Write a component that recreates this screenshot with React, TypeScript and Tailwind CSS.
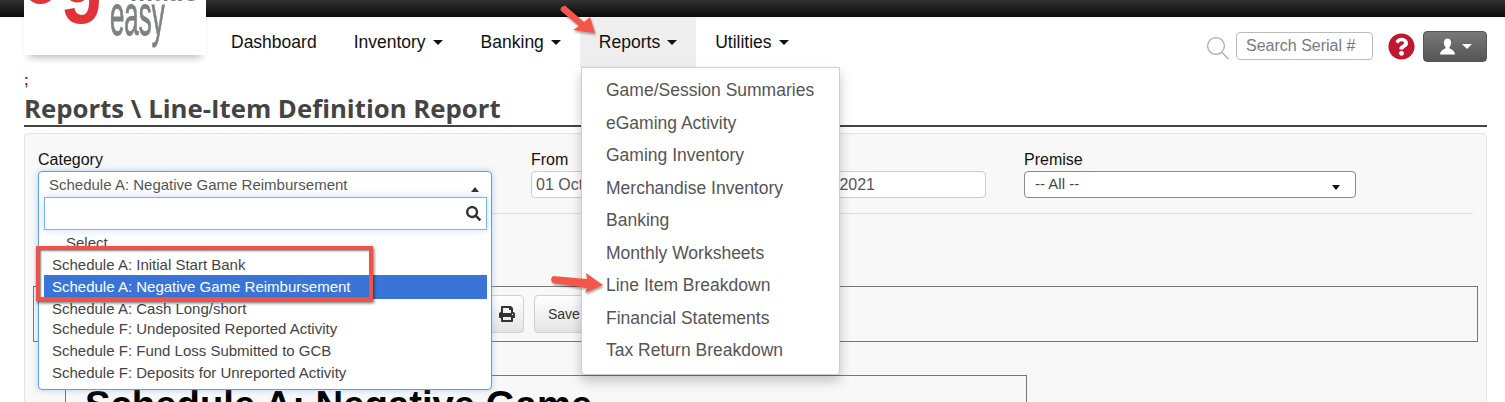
import React from "react";
import { FaPrint, FaQuestionCircle, FaSearch } from "react-icons/fa";

const sans = "font-['Liberation_Sans',Arial,sans-serif]";

function Caret({ up = false, light = false, small = false }: { up?: boolean; light?: boolean; small?: boolean }) {
  return (
    <span
      className={`inline-block w-0 h-0 border-x-transparent ${small ? "border-x-[4px]" : "border-x-[5px]"} ${up ? "border-b-[5px]" : "border-t-[5px]"} ${light ? "border-t-white" : "border-t-[#111] border-b-[#333]"}`}
    />
  );
}

function NavItem({ label, caret = true, active = false, pad = "px-[19px]" }: { label: string; caret?: boolean; active?: boolean; pad?: string }) {
  return (
    <div className={`h-[50px] flex items-center gap-[7px] text-[17.5px] text-[#111] ${pad} ${active ? "bg-[#eeeeee]" : ""}`}>
      <span>{label}</span>
      {caret && <Caret />}
    </div>
  );
}

const reports = [
  "Game/Session Summaries",
  "eGaming Activity",
  "Gaming Inventory",
  "Merchandise Inventory",
  "Banking",
  "Monthly Worksheets",
  "Line Item Breakdown",
  "Financial Statements",
  "Tax Return Breakdown",
];

const options = [
  { t: "Schedule A: Initial Start Bank", c: "h-[21px] pt-[1px]" },
  { t: "Schedule A: Negative Game Reimbursement", c: "h-[24px] bg-[#3875d7] text-white" },
  { t: "Schedule A: Cash Long/short", c: "h-[20px]" },
  { t: "Schedule F: Undeposited Reported Activity", c: "h-[21px]" },
  { t: "Schedule F: Fund Loss Submitted to GCB", c: "h-[22px]" },
  { t: "Schedule F: Deposits for Unreported Activity", c: "h-[22px]" },
];

function Logo() {
  return (
    <div className="relative z-20 -mt-[17px] w-[182px] h-[55px] shrink-0 overflow-hidden bg-white shadow-[0_7px_8px_-5px_rgba(0,0,0,0.3)]">
      <span className="absolute -left-[4px] -top-[82px] text-[100px] leading-none font-bold text-[#e4323a] scale-x-[0.72] origin-top-left blur-[0.4px] font-['Liberation_Sans',sans-serif]">eg</span>
      <span className="absolute left-[106px] -top-[21px] text-[26px] leading-none font-bold text-[#77787b] blur-[0.4px] font-['Liberation_Sans',sans-serif]">made</span>
      <span className="absolute left-[86px] -top-[14px] text-[34px] leading-none text-[#808184] scale-y-[1.7] scale-x-[0.76] origin-top-left blur-[0.4px] [-webkit-text-stroke:0.6px_#808184] font-['Liberation_Sans',sans-serif]">easy</span>
    </div>
  );
}

function Field({ label, width, children }: { label: string; width: string; children: React.ReactNode }) {
  return (
    <div className={`${width} shrink-0 relative`}>
      <div className="h-[21px] leading-[20px] text-[16px] text-[#111]">{label}</div>
      {children}
    </div>
  );
}

function CategoryDropdown() {
  return (
    <div className="absolute z-10 left-0 top-[21px] w-[454px] h-[219px] bg-white border border-[#5c9fe6] rounded-[4px] shadow-[0_0_6px_rgba(90,160,230,0.45)] text-[15px] text-[#444] overflow-hidden">
      <div className="h-[25px] pl-[10px] pr-[12px] pt-[2px] flex items-center justify-between">
        <span className="text-[#555]">Schedule A: Negative Game Reimbursement</span>
        <span className="mt-[3px]"><Caret up small /></span>
      </div>
      <div className="ml-[5px] mr-[4px] h-[33px] border border-[#7ab3ea] shadow-[0_0_8px_rgba(90,160,230,0.35)] flex items-center justify-end pr-[5px]">
        <FaSearch className="text-[15px] text-[#333]" />
      </div>
      <div className="ml-[5px] mr-[4px] pt-[2px]">
        <div className="h-[22px] pl-[22px] leading-[22px]">Select</div>
        {options.map((o) => (
          <div key={o.t} className={`pl-[8px] flex items-center ${o.c}`}>{o.t}</div>
        ))}
      </div>
    </div>
  );
}

function ReportsMenu() {
  return (
    <div className="absolute z-30 left-[581px] top-[67px] w-[259px] h-[308px] bg-white border border-[#cfcfcf] rounded-b-[4px] shadow-[0_6px_12px_rgba(0,0,0,0.22)] pt-[6px] text-[17.5px] text-[#555]">
      {reports.map((r) => (
        <div key={r} className="h-[32.5px] pl-[24px] flex items-center">{r}</div>
      ))}
    </div>
  );
}

export default function App() {
  return (
    <div className={`relative w-[1505px] h-[402px] overflow-hidden bg-white ${sans}`}>
      <div className="h-[17px] bg-gradient-to-b from-[#333333] to-[#0a0a0a]" />
      <div className="h-[50px] flex pl-[24px] pr-[18px] shadow-[inset_0_4px_4px_-3px_rgba(0,0,0,0.06)]">
        <Logo />
        <div className="flex ml-[6px]">
          <NavItem label="Dashboard" caret={false} pad="pl-[19px] pr-[18px]" />
          <NavItem label="Inventory" />
          <NavItem label="Banking" />
          <NavItem label="Reports" active />
          <NavItem label="Utilities" />
        </div>
        <div className="ml-auto flex items-center h-[50px] gap-[6px] pt-[8px]">
          <svg width="24" height="25" viewBox="0 0 24 25" fill="none" stroke="#aaaaaa" strokeWidth="1.3" className="mt-[4px]">
            <circle cx="10" cy="10" r="8.4" />
            <path d="M16 16.5l6.5 6.5" />
          </svg>
          <div className="w-[137px] h-[28px] border border-[#bbbbbb] rounded-[4px] pl-[9px] flex items-center text-[16px] text-[#7a7a7a] bg-white">Search Serial #</div>
          <FaQuestionCircle className="ml-[9px] text-[27px] text-[#c3162f]" />
          <div className="ml-[2px] w-[64px] h-[31px] rounded-[4px] border border-[#555] bg-gradient-to-b from-[#787878] to-[#565656] flex items-center justify-center gap-[6px]">
            <svg width="17" height="17" viewBox="0 0 17 17" fill="#ffffff">
              <path d="M8.5 0.5c2.3 0 3.6 1.8 3.6 4.2 0 1.9-.8 3.5-1.6 4.4-.3.4-.2 1.1.3 1.4 1.6.9 4.7 2 5.2 5.9H1c.5-3.9 3.6-5 5.2-5.9.5-.3.6-1 .3-1.4C5.700 8.200 4.900 6.600 4.900 4.700 4.900 2.300 6.200 0.500 8.500 0.500z" />
            </svg>
            <Caret light />
          </div>
        </div>
      </div>

      <main className="pl-[24px] pr-[18px]">
        <div className="h-[25px] leading-[27px] text-[14px] font-bold text-[#a02020]">;</div>
        <h1 className="h-[35px] border-b-2 border-[#444] text-[25.75px] leading-[33px] font-bold text-[#444] font-['Open_Sans',sans-serif]">
          Reports \ Line-Item Definition Report
        </h1>
        <section className="mt-[6px] h-[300px] bg-[#f8f8f8] border border-[#e3e3e3] rounded-[4px] px-[13px] pt-[16px]">
          <div className="flex gap-[39px] h-[64px] border-b border-[#dddddd]">
            <Field label="Category" width="w-[454px]">
              <CategoryDropdown />
            </Field>
            <Field label="From" width="w-[455px]">
              <div className="h-[27px] bg-white border border-[#cccccc] rounded-[4px] pl-[4px] flex items-center justify-between text-[16px] text-[#555]">
                <span>01 Oct</span>
                <span className="mr-[110px]">2021</span>
              </div>
            </Field>
            <Field label="Premise" width="w-[332px] -ml-[1px]">
              <div className="h-[27px] bg-white border border-[#8a8a8a] rounded-[4px] pl-[10px] pr-[15px] flex items-center justify-between text-[15px] text-[#444]">
                <span>-- All --</span>
                <span className="mt-[1px]"><Caret small /></span>
              </div>
            </Field>
          </div>
          <div className="-mx-[5px] mt-[72px] h-[56px] border border-[#777777] flex items-center pl-[455px] gap-[10px]">
            <div className="w-[35px] h-[38px] border border-[#d0d0d0] rounded-[4px] bg-gradient-to-b from-[#ffffff] to-[#e4e4e4] flex items-center justify-center">
              <FaPrint className="text-[16px] text-[#333]" />
            </div>
            <div className="w-[90px] h-[38px] border border-[#d0d0d0] rounded-[4px] bg-gradient-to-b from-[#ffffff] to-[#e4e4e4] pl-[13px] flex items-center text-[14px] text-[#333]">Save</div>
          </div>
          <div className="ml-[27px] mt-[33px] w-[962px] h-[60px] border border-[#777777] pl-[19px] pt-[7px] text-[38.3px] leading-[44px] font-bold text-black whitespace-nowrap">
            Schedule A: Negative Game
          </div>
        </section>
      </main>

      <ReportsMenu />

      {/* annotations */}
      <div className="absolute z-40 left-[36px] top-[246px] w-[337px] h-[55px] border-[4px] border-[#f0524a] shadow-[1px_2px_3px_rgba(0,0,0,0.6),inset_1px_1px_2px_rgba(0,0,0,0.5)]" />
      <svg className="absolute z-40 left-[555px] top-[0px] drop-shadow-[1px_2px_1px_rgba(0,0,0,0.35)]" width="50" height="40" viewBox="0 0 50 40">
        <path d="M10 5.500L29 22l6-5 5 16-22-3 6-4L6 11q-2-4 4-5.500z" fill="#f4574a" />
      </svg>
      <svg className="absolute z-40 left-[548px] top-[270px] drop-shadow-[1px_2px_1px_rgba(0,0,0,0.35)]" width="62" height="30" viewBox="0 0 62 30">
        <path d="M5 6l34 3-1-6 17 12-18 8 2-5-34-5q-4-3.500 0-7z" fill="#f4574a" />
      </svg>
    </div>
  );
}
